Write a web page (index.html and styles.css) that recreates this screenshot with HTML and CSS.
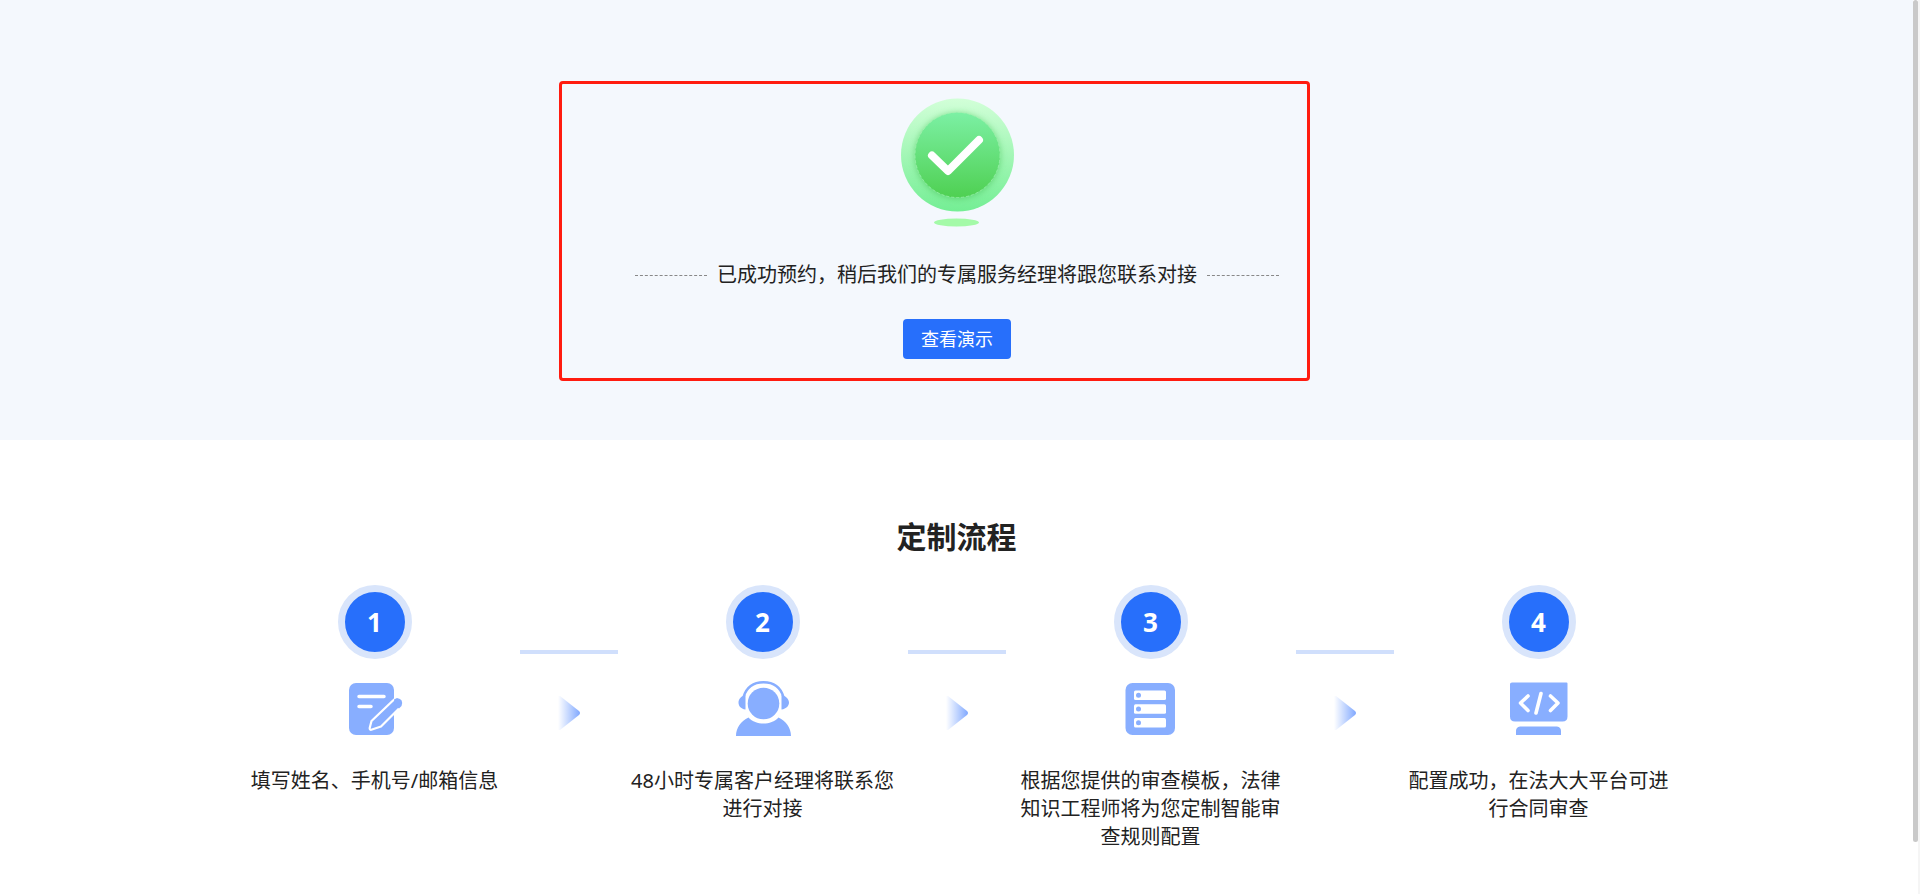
FILE: index.html
```html
<!DOCTYPE html>
<html lang="zh-CN">
<head>
<meta charset="utf-8">
<title>定制流程</title>
<link rel="stylesheet" href="styles.css">
</head>
<body>
<div class="page">
<main class="content">
  <section class="hero">
    <div class="result">
      <svg class="result-icon" viewBox="0 0 114 130" aria-hidden="true">
        <defs>
          <linearGradient id="ring" x1="0" y1="0" x2="0" y2="1"><stop offset="0" stop-color="#d2ffd8"/><stop offset="1" stop-color="#74ee94"/></linearGradient>
          <linearGradient id="disc" x1="0" y1="0" x2="0" y2="1"><stop offset="0" stop-color="#7cf0a4"/><stop offset="1" stop-color="#4fd052"/></linearGradient>
          <filter id="glow" x="-20%" y="-20%" width="140%" height="140%"><feGaussianBlur stdDeviation="3"/></filter>
          <filter id="soft" x="-20%" y="-50%" width="140%" height="200%"><feGaussianBlur stdDeviation="0.7"/></filter>
        </defs>
        <circle cx="57.500" cy="57" r="56.500" fill="url(#ring)"/>
        <circle cx="57.500" cy="58" r="43" fill="#4fc860" opacity=".65" filter="url(#glow)"/>
        <circle cx="57.500" cy="57" r="42.500" fill="url(#disc)" stroke="#a5f5b4" stroke-width=".6" stroke-dasharray="3 2"/>
        <path d="M32 57.500 48 73 79 42" fill="none" stroke="#fff" stroke-width="8" stroke-linecap="round" stroke-linejoin="round"/>
        <ellipse cx="56.500" cy="124.500" rx="22.500" ry="4" fill="#a4faa8" filter="url(#soft)"/>
      </svg>
      <p class="result-text">已成功预约，稍后我们的专属服务经理将跟您联系对接</p>
      <button class="demo" type="button">查看演示</button>
    </div>
  </section>

  <section class="process">
    <h2 class="process-title">定制流程</h2>
    <ol class="steps">
      <li class="step">
        <span class="number">1</span>
        <svg class="step-icon" viewBox="0 0 60 60" aria-hidden="true">
          <rect x="4" y="4" width="45" height="52" rx="7" fill="#88aeff"/>
          <path d="M14 17.500H39M14 27.500H26" stroke="#fff" stroke-width="3.500" stroke-linecap="round"/>
          <path d="M26.500 42 48 21.500Q51.500 18 55 21.500 58.500 25 55 28.500L36 47.500 27 50.500Q24.500 51.500 24.700 49Z" fill="#88aeff" stroke="#fff" stroke-width="2.200" stroke-linejoin="round"/>
          <path d="M49 20.500 52 19Q59 20 56.500 27L54 29.500 50 27Z" fill="#88aeff"/>
        </svg>
        <p class="step-text">填写姓名、手机号/邮箱信息</p>
      </li>
      <li class="link" aria-hidden="true"><span class="line"></span><svg class="arrow" viewBox="0 0 24 36"><defs><linearGradient id="fade"><stop offset="0" stop-color="#88aeff" stop-opacity="0"/><stop offset="1" stop-color="#80a8ff"/></linearGradient></defs><path d="M1 1H3L22 16Q24 18 22 20L3 35H1Z" fill="url(#fade)"/></svg></li>
      <li class="step">
        <span class="number">2</span>
        <svg class="step-icon" viewBox="0 0 60 60" aria-hidden="true">
          <g fill="#88aeff">
          <circle cx="30.500" cy="24.500" r="15.800"/>
          <path d="M12.500 15.500V30.500C7.500 30 5.500 26.500 5.500 23.500 5.500 20 8.500 17 12.500 15.500ZM48.500 15.500V30.500C53.500 30 56 26.500 56 23.500 56 20 52.500 17 48.500 15.500Z"/>
          <path d="M15.500 38.500C23 46.500 38 46.500 45.500 38.500 53 42 58 49 58 57H3C3 49 8 42 15.500 38.500Z"/>
          </g>
          <path d="M10.500 18C13.500 8 21 3.200 30.500 3.200S47.500 8 50.500 18" fill="none" stroke="#88aeff" stroke-width="2.400"/>
        </svg>
        <p class="step-text">48小时专属客户经理将联系您进行对接</p>
      </li>
      <li class="link" aria-hidden="true"><span class="line"></span><svg class="arrow" viewBox="0 0 24 36"><path d="M1 1H3L22 16Q24 18 22 20L3 35H1Z" fill="url(#fade)"/></svg></li>
      <li class="step">
        <span class="number">3</span>
        <svg class="step-icon" viewBox="0 0 60 60" aria-hidden="true">
          <rect x="4.500" y="4" width="49.500" height="52" rx="7" fill="#88aeff"/>
          <g fill="#fff"><rect x="13" y="11.500" width="32" height="9.500" rx="1.500"/><rect x="13" y="25.200" width="32" height="9.500" rx="1.500"/><rect x="13" y="39" width="32" height="9.500" rx="1.500"/></g>
          <g fill="#88aeff"><circle cx="17.500" cy="16.200" r="2.500"/><circle cx="17.500" cy="30" r="2.500"/><circle cx="17.500" cy="43.700" r="2.500"/></g>
        </svg>
        <p class="step-text">根据您提供的审查模板，法律知识工程师将为您定制智能审查规则配置</p>
      </li>
      <li class="link" aria-hidden="true"><span class="line"></span><svg class="arrow" viewBox="0 0 24 36"><path d="M1 1H3L22 16Q24 18 22 20L3 35H1Z" fill="url(#fade)"/></svg></li>
      <li class="step">
        <span class="number">4</span>
        <svg class="step-icon" viewBox="0 0 60 60" aria-hidden="true">
          <path d="M3 3.500H57.500Q58.500 3.500 58.500 4.500V37.500Q58.500 42.500 53.500 42.500H6Q1 42.500 1 37.500V5Q1 3.500 3 3.500ZM11 47.500H48Q52 48 52 52V56H7V52Q7 48 11 47.500Z" fill="#88aeff"/>
          <path d="M19 17 11.500 24 19 31.500M32 14.500 27 34M41.500 17 49 24 41.500 31.500" fill="none" stroke="#fff" stroke-width="3.600" stroke-linecap="round" stroke-linejoin="round"/>
        </svg>
        <p class="step-text">配置成功，在法大大平台可进行合同审查</p>
      </li>
    </ol>
  </section>
</main>
<div class="rail" aria-hidden="true"><span class="thumb"></span></div>
</div>
</body>
</html>
```

FILE: styles.css
```css
* { box-sizing: border-box; }
body {
  margin: 0;
  background: #fff;
  color: #222;
  font-family: "Noto Sans", "Noto Sans CJK SC", sans-serif;
  font-size: 20px;
  line-height: 28px;
}
.page { display: flex; min-height: 100vh; }
.content { flex: 1; }
.hero {
  display: flex;
  justify-content: center;
  padding: 81px 0 59px;
  background: #f4f8fd;
}
.result {
  display: flex;
  flex-direction: column;
  align-items: center;
  margin-right: 44px;
  padding: 14px 28px 19px 73px;
  border: 3px solid #ff1c10;
  border-radius: 4px;
}
.result-icon { width: 114px; height: 130px; }
.result-text {
  display: flex;
  align-items: center;
  gap: 10px;
  margin: 33px 0 30px;
}
.result-text::before,
.result-text::after {
  content: "";
  width: 72px;
  border-top: 1px dashed #888;
}
.demo {
  height: 40px;
  padding: 0 18px;
  border: 0;
  border-radius: 4px;
  background: #276ffb;
  color: #fff;
  font: inherit;
  font-size: 18px;
}
.process { padding: 77px 20px 48px; }
.process-title {
  margin: 0 0 28px;
  font-size: 30px;
  line-height: 40px;
  text-align: center;
}
.steps {
  display: flex;
  justify-content: center;
  margin: 0;
  padding: 0;
  list-style: none;
}
.step {
  display: flex;
  flex-direction: column;
  align-items: center;
  width: 290px;
}
.number {
  display: grid;
  place-items: center;
  width: 74px;
  height: 74px;
  border: 7px solid #d9e5fb;
  border-radius: 50%;
  background: #276ffb;
  color: #fff;
  font-size: 26px;
  font-weight: 700;
}
.step-icon { width: 60px; height: 60px; margin: 20px 0 28px; }
.step-text { width: 268px; margin: 0; text-align: center; }
.link {
  display: flex;
  flex-direction: column;
  align-items: center;
  gap: 41px;
  width: 98px;
  padding-top: 65px;
}
.line { width: 100%; height: 4px; background: #d0dffc; }
.arrow { width: 24px; height: 36px; }
.rail { width: 7px; border-right: 2px solid #f5f5f5; }
.thumb { display: block; height: 842px; border-radius: 3px; background: #c9c9c9; }
```
